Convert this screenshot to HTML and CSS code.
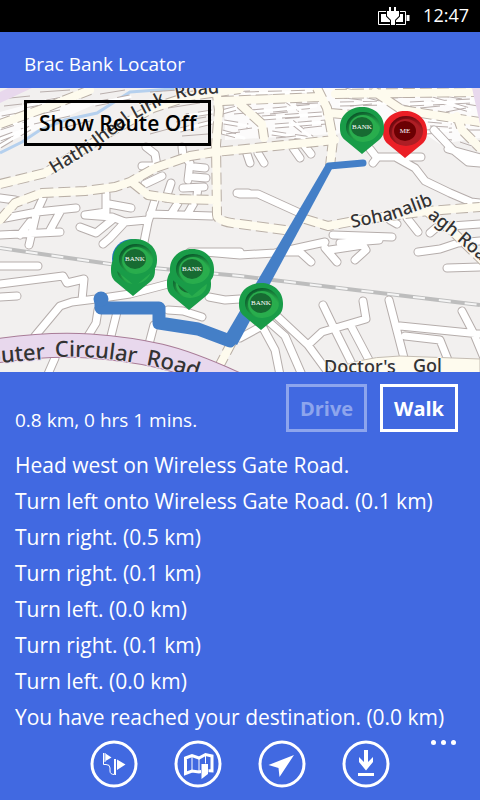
FILE: index.html
```html
<!DOCTYPE html>
<html lang="en">
<head>
<meta charset="utf-8">
<meta name="viewport" content="width=device-width, initial-scale=1">
<title>Brac Bank Locator</title>
<link rel="stylesheet" href="styles.css">
</head>
<body>
<div class="status">
  <svg class="battery" viewBox="0 0 32 18" aria-hidden="true">
    <path d="M.5 4.500h27v13H.5z" fill="none" stroke="#fff"/>
    <path d="M3 7h22v8H3z" fill="#fff"/>
    <path d="M28.500 8h3v6h-3z" fill="#fff"/>
    <path d="M11 0h2v4h3V0h2v4h3v5l-4 4v5h-4v-5L9 9V4h2z" fill="#fff" stroke="#000" stroke-width="2" paint-order="stroke"/>
  </svg>
  <time>12:47</time>
</div>
<header class="header"><h1>Brac Bank Locator</h1></header>

<main>
<section class="map" aria-label="Map">
<svg class="canvas" viewBox="0 88 480 284" preserveAspectRatio="xMidYMid slice">
  <defs>
    <g id="tiny">
      <path d="M0 139L24 130M0 128L24 120M0 146L30 128M2 118L24 114M24 106L80 96M95 104L130 97"/>
      <path d="M245 94L315 92M250 112L316 106M262 118L322 114M275 126L326 122M272 133L318 140M280 96L300 110M292 122L312 138"/>
      <path d="M335 96L372 94M340 104L384 103M400 94L466 92M410 104L472 101M432 99L470 110M345 90L380 99M428 120L452 122M426 132L452 130"/>
      <path d="M212 112L186 116M212 122L180 130M222 112L244 106M224 122L248 126M222 132L244 138"/>
    </g>
    <g id="minor">
      <path d="M142 166L157 166L155 154L146 147M145 184L162 176M171 183L166 198M182 147L183 155L190 163L188 180M205 168L195 167M206 178L194 177M204 187L183 188M198 188L197 195M237 193L248 193"/>
      <path d="M43 198L37 211L29 245M0 219L37 212L76 208M0 235L60 232M60 212L49 232M30 222L20 235M106 194L106 212L85 215L112 217M109 204L131 208M155 200L148 222L144 242M112 217L125 222L147 220M125 222L110 238L103 244M112 220L96 233L80 227M150 214L212 216M178 203L171 214M194 203L187 215"/>
      <path d="M0 198L15 200"/>
      <path d="M240 194L258 194L302 214M373 163L377 158L370 149M378 157L421 157M397 158L415 168L425 181L450 193L471 202L480 203"/>
      <path d="M247 154L250 163M258 153L264 163M293 148L300 158M304 145L311 154M434 130L452 149L468 162L480 163M448 149L480 158"/>
      <path d="M333 235L392 237M340 243L379 240M390 220L397 224M407 218L418 232M430 233L437 227L480 224M418 252L440 249L458 243L480 241"/>
      <path d="M190 252L240 252M205 252L240 255L275 253L325 242M278 252L300 252L311 262M325 248L337 262M355 260L366 250L363 245L330 250M447 268L480 267"/>
      <path d="M0 266L38 266M0 284L63 276L67 283L84 279L82 300M0 297L17 296M35 336L60 306L72 302L96 299L130 294L168 284M98 310L96 323L88 336M117 312L111 336M154 325L149 344M168 310L183 311L202 317M209 297L225 300L240 299M55 358L48 374"/>
      <path d="M240 338L262 326L275 350L280 375M268 321L285 336L302 375M277 316L308 345L330 375M308 345L322 332L366 319L363 301M323 305L336 332L354 368M350 324L370 362M389 300L404 358M400 326L480 334M405 336L440 340L448 360M462 311L474 334L484 358"/>
    </g>
    <g id="yellow">
      <path d="M0 184L45 173L82 150L110 132L153 108L190 96L240 89"/>
      <path d="M0 220L15 203L42 193L85 191L115 187L130 182L155 168L190 156L215 152L285 145L335 140"/>
      <path d="M133 183L148 195L175 199L216 200M216 88L219 110L216 145L217 215Q217 222 240 224L292 231"/>
      <path d="M305 219L328 226L360 220L428 211L480 207M425 210L452 231L484 262"/>
      <path d="M333 140L330 166M232 342L214 376M0 124L45 108L90 90"/>
      <path d="M222 101L320 97M240 104L262 124L264 138M317 88L327 108L333 140M375 92L402 110L440 116L480 122M457 116L462 130L480 148M330 113L352 115M335 94L480 92"/>
    </g>
    <radialGradient id="gg" cx=".6" cy=".65" r=".65"><stop offset=".6" stop-color="#29ad4d"/><stop offset="1" stop-color="#0b5a2b"/></radialGradient>
    <radialGradient id="rg" cx=".6" cy=".65" r=".65"><stop offset=".6" stop-color="#ad1e25"/><stop offset="1" stop-color="#6d080e"/></radialGradient>
    <g id="bank">
      <path d="M0 27L-17 13C-22 9-22 4-22 0C-22-12-12-20 0-20S22-12 22 0C22 4 22 9 17 13Z" fill="#199c48"/>
      <ellipse cx="1" cy="0" rx="17" ry="15" fill="url(#gg)"/>
      <ellipse cx="1" cy="1" rx="14" ry="13" fill="#29ad4d"/>
      <ellipse cy="0" rx="11" ry="10" fill="#176b32"/>
      <text y="2" class="pin">BANK</text>
    </g>
  </defs>

  <path d="M0 88H480V372H0z" fill="#f2f0ef"/>
  <path d="M225 88H480V138L440 144L410 124L335 134L225 140zM0 112L55 97L100 102L30 133L0 145z" fill="#fff" opacity=".75"/>
  <path class="river" d="M0 153L22 142L40 130L65 120L97 113L130 92L185 88"/>
  <use href="#tiny" class="tiny-edge"/><use href="#tiny" class="tiny-fill"/>
  <path class="streak" d="M0 99L30 96M4 106L22 104M40 92L70 90M100 94L125 90M30 116L60 110M34 124L70 116M62 128L90 121M150 92L178 90M168 108L200 103M176 122L206 117M150 134L172 128M182 136L208 134M228 92L250 91M256 96L272 95M276 102L296 100M234 114L246 113M238 130L252 128M270 114L288 112M282 118L300 117M300 94L314 95M296 104L318 103M304 128L322 126M276 138L296 136M332 92L352 91M344 98L362 100M366 92L386 93M350 106L372 104M392 98L408 97M398 104L412 107M414 95L436 94M420 108L440 106M444 96L462 99M446 112L466 108M466 104L478 106M430 126L448 127M466 130L480 130M436 138L452 140M460 142L478 148M226 134L240 132"/>
  <use href="#minor" class="minor-edge"/><use href="#minor" class="minor-fill"/>
  <g class="yellow-edge"><use href="#yellow"/></g>
  <g class="yellow-fill"><use href="#yellow"/></g>
  <path d="M322 376Q350 357 400 356L480 359V376z" fill="#fefbee" stroke="#c5bdb3"/>

  <path class="rail" d="M0 248L110 264L240 276L480 305"/>
  <path class="rail-dash" d="M0 248L110 264L240 276L480 305"/>

  <path class="trunk-edge" d="M-5 351Q50 343 90 346T160 356T240 386"/>
  <path class="trunk-fill" d="M-5 351Q50 343 90 346T160 356T240 386"/>
  <path d="M0 92L8 88H32L0 103zM472 88H480V124z" fill="#e8d8ed"/>

  <path id="hathi" d="M54 174L92 151L130 122L165 103" fill="none"/>
  <path id="link-road" d="M176 99L195 95L225 93" fill="none"/>
  <path id="uter" d="M-12 364L45 359" fill="none"/>
  <path id="circular" d="M55 357Q95 355 140 364" fill="none"/>
  <path id="road" d="M146 365Q175 370 210 383" fill="none"/>
  <path id="sohan" d="M352 228L395 219L435 204" fill="none"/>
  <path id="agh" d="M427 217L455 239L495 273" fill="none"/>
  <g class="label">
    <text><textPath href="#hathi">Hathi Jheel Link</textPath></text>
    <text><textPath href="#link-road">Road</textPath></text>
    <text class="big"><textPath href="#uter">outer</textPath></text>
    <text class="big"><textPath href="#circular">Circular</textPath></text>
    <text class="big"><textPath href="#road">Road</textPath></text>
    <text><textPath href="#sohan">Sohanalib</textPath></text>
    <text><textPath href="#agh">agh Road</textPath></text>
    <text x="324" y="373">Doctor's</text>
    <text x="413" y="372">Gol</text>
  </g>

  <path class="route" d="M101 299L101 308H159V323L198 329L230 341" stroke-width="13"/>
  <path class="route" d="M329 166L363 163" stroke-width="7"/>
  <path d="M326 164L333 167L237 345L224 338z" fill="#447fc7"/>
  <circle cx="101" cy="299" r="7.500" fill="#447fc7"/>
  <circle cx="132" cy="259" r="20" fill="#1f78c0"/>

  <use href="#bank" x="133" y="269"/><use href="#bank" x="135" y="259"/>
  <use href="#bank" x="189" y="283"/><use href="#bank" x="192" y="269"/>
  <use href="#bank" x="261" y="303"/>
  <g transform="translate(405 131)">
    <path d="M0 27L-17 13C-22 9-22 4-22 0C-22-12-12-20 0-20S22-12 22 0C22 4 22 9 17 13Z" fill="#eb1f26"/>
    <ellipse cx="1" rx="17" ry="15" fill="url(#rg)"/>
    <ellipse cx="1" cy="1" rx="14" ry="13" fill="#ad1e25"/>
    <ellipse rx="11" ry="10" fill="#6b0003"/>
    <text y="2" class="pin">ME</text>
  </g>
  <use href="#bank" x="362" y="127"/>
</svg>
<button class="toggle" type="button">Show Route Off</button>
</section>

<section class="directions">
  <div class="summary">
    <p>0.8 km, 0 hrs 1 mins.</p>
    <button type="button" disabled>Drive</button>
    <button type="button">Walk</button>
  </div>
  <ol>
    <li>Head west on Wireless Gate Road.</li>
    <li>Turn left onto Wireless Gate Road. (0.1 km)</li>
    <li>Turn right. (0.5 km)</li>
    <li>Turn right. (0.1 km)</li>
    <li>Turn left. (0.0 km)</li>
    <li>Turn right. (0.1 km)</li>
    <li>Turn left. (0.0 km)</li>
    <li>You have reached your destination. (0.0 km)</li>
  </ol>
</section>
</main>

<nav class="appbar">
  <button type="button" aria-label="Route">
    <svg viewBox="0 0 48 48"><circle cx="24" cy="24" r="22"/><path d="M13.500 13V24.500H16Q20 24.500 20 28V31Q20 34.500 24.500 34.500V19" fill="none" stroke="#fff" stroke-width="1"/><path d="M15.500 13.500L21.500 17.500L15.500 21zM27 19.500L35.500 24.500L27 30z" fill="#fff"/><path d="M15 13V22M25.500 19V35" stroke="#fff" fill="none" stroke-width="1"/></svg>
  </button>
  <button type="button" aria-label="Map">
    <svg viewBox="0 0 48 48"><circle cx="24" cy="24" r="22"/><path d="M11.500 18L18 15.500L25 18L31.500 14.500L38 16V31L31.500 30.500L25 32L18 31L11.500 33.500z" fill="none" stroke="#fff" stroke-width="3"/><path d="M18 16V31M25 18V31M31.500 15V24" stroke="#fff" fill="none"/><path d="M27.500 24H34V34L27.500 39z" fill="#fff" stroke="#4169e1" stroke-width="1" paint-order="stroke"/></svg>
  </button>
  <button type="button" aria-label="My location">
    <svg viewBox="0 0 48 48"><circle cx="24" cy="24" r="22"/><path d="M36 15L21.500 37L20.500 28L10.500 25z" fill="#fff"/></svg>
  </button>
  <button type="button" aria-label="Download">
    <svg viewBox="0 0 48 48"><circle cx="24" cy="24" r="22"/><path d="M22 10H26V22L31 17V22L24 30.500L17 22V17L22 22zM16 33H32V36H16z" fill="#fff"/></svg>
  </button>
  <button class="more" type="button" aria-label="More"><i></i><i></i><i></i></button>
</nav>
</body>
</html>
```

FILE: styles.css
```css
* { box-sizing: border-box; }
body {
  margin: 0;
  min-height: 100vh;
  background: #4169e1;
  color: #fff;
  font-family: "Open Sans", "Noto Sans", sans-serif;
}
h1, p, ol { margin: 0; padding: 0; font-weight: 400; }
button {
  font: inherit;
  color: inherit;
  background: none;
  border: 0;
  padding: 0;
}
.status {
  display: flex;
  justify-content: flex-end;
  align-items: center;
  gap: 13px;
  height: 32px;
  padding-right: 11px;
  background: #000;
  font-size: 18px;
  line-height: 30px;
}
.status time { padding-bottom: 2px; }
.battery { width: 32px; height: 18px; }
.header { padding: 16px 24px 8px; }
.header h1 { font-size: 19px; line-height: 32px; }

.map { position: relative; overflow: hidden; }
.canvas { display: block; width: 100%; }
.toggle {
  position: absolute;
  top: 12px;
  left: 24px;
  height: 46px;
  padding: 0 12px;
  border: 3px solid #000;
  color: #000;
  font-size: 21px;
  font-weight: 600;
}
.river, .rail, .rail-dash, .trunk-edge, .trunk-fill, .route, .streak { fill: none; }
.river { stroke: #b5d0ee; stroke-width: 3; }
.streak { stroke: #b9afad; }
.tiny-edge, .tiny-fill, .minor-edge, .minor-fill, .yellow-edge, .yellow-fill {
  fill: none;
  stroke-linecap: round;
  stroke-linejoin: round;
}
.tiny-edge { stroke: #b9afad; stroke-width: 5; stroke-dasharray: 14 9; stroke-linecap: butt; }
.tiny-fill { stroke: #fff; stroke-width: 3; }
.minor-edge { stroke: #b5adab; stroke-width: 9; }
.minor-fill { stroke: #fff; stroke-width: 7; }
.yellow-edge { stroke: #b9afa6; stroke-width: 10; stroke-dasharray: 12 5; stroke-linecap: butt; }
.yellow-fill { stroke: #fefbee; stroke-width: 8; }
.rail { stroke: #bdbdbd; stroke-width: 4; }
.rail-dash { stroke: #f5f5f5; stroke-width: 2; stroke-dasharray: 12 14; }
.trunk-edge { stroke: #a87c97; stroke-width: 25; }
.trunk-fill { stroke: #e8d8ed; stroke-width: 23; }
.route { stroke: #447fc7; stroke-linecap: round; stroke-linejoin: round; }
.label {
  fill: #333;
  stroke: #f8f6f3;
  stroke-width: 2px;
  paint-order: stroke;
  font-family: "Noto Sans", sans-serif;
  font-size: 18px;
  font-weight: 500;
}
.label .big { font-size: 22px; stroke: #e8d8ed; }
.pin {
  fill: #fff;
  stroke: none;
  font-family: "Liberation Serif", serif;
  font-size: 7px;
  text-anchor: middle;
}

.directions { padding: 12px 15px 0; }
.summary {
  display: flex;
  align-items: flex-end;
  gap: 13px;
  padding-right: 7px;
  margin-bottom: 15px;
}
.summary p { flex: 1; font-size: 19px; line-height: 24px; }
.summary button {
  height: 48px;
  padding: 0 11px;
  border: 3px solid #fff;
  font-size: 20px;
  font-weight: 700;
}
.summary button:disabled { opacity: .4; }
ol { list-style: none; font-size: 21px; line-height: 36px; }

.appbar {
  position: relative;
  display: flex;
  justify-content: center;
  gap: 36px;
  padding: 5px 0 12px;
}
.appbar svg { display: block; width: 48px; height: 48px; }
.appbar circle { fill: none; stroke: #fff; stroke-width: 3; }
.appbar .more {
  position: absolute;
  top: 1px;
  right: 24px;
  display: flex;
  gap: 5px;
  padding: 4px 0;
}
.more i { width: 5px; height: 5px; border-radius: 50%; background: #fff; }
```
